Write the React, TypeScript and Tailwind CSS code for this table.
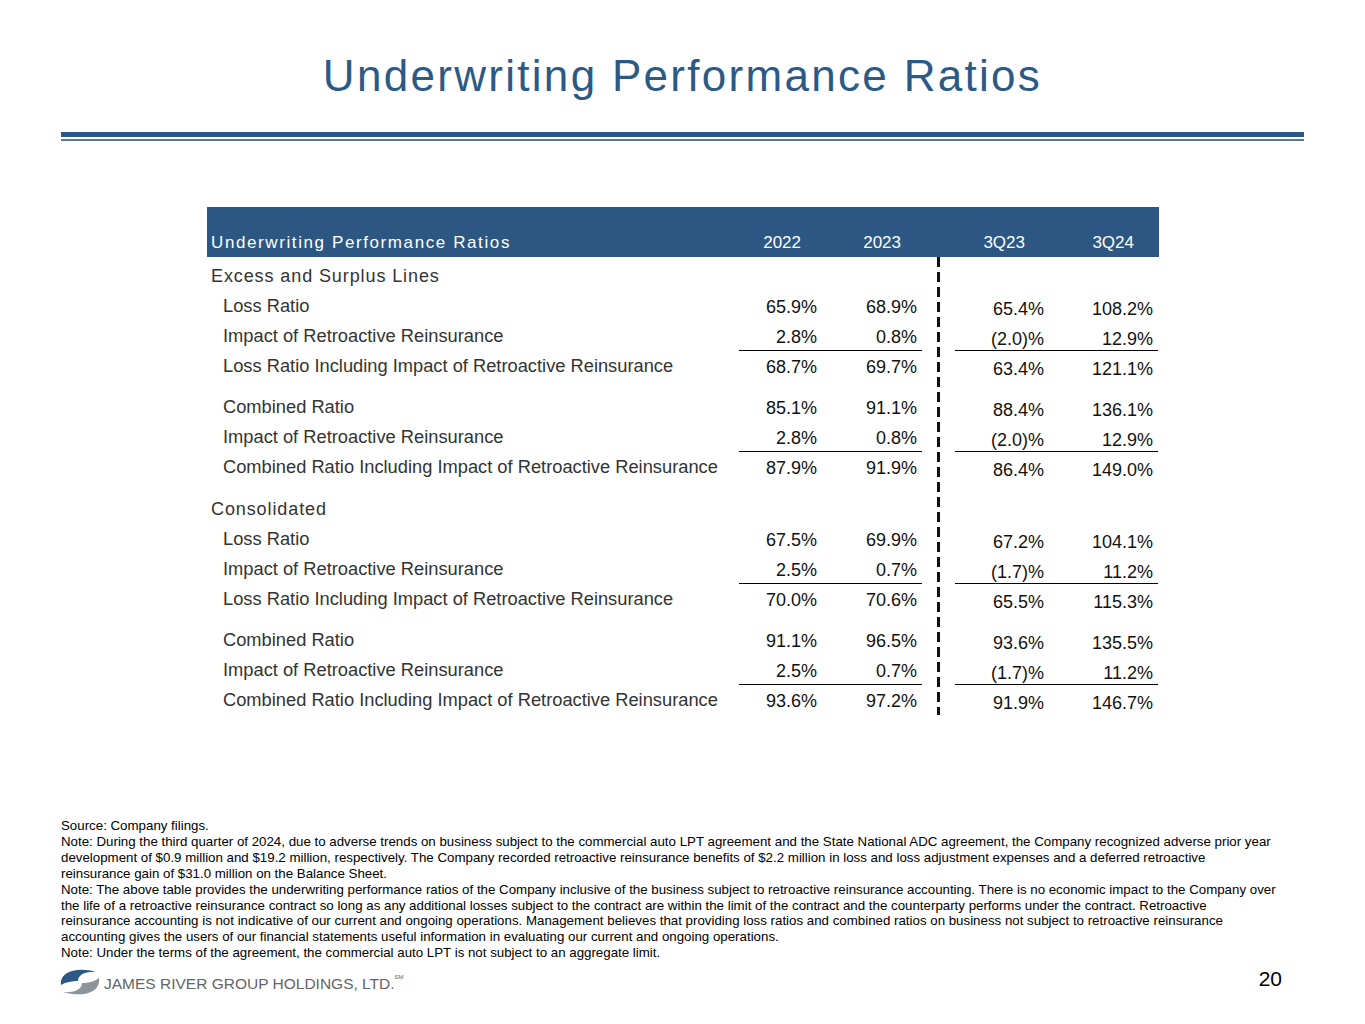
import React from "react";

type Row =
  | { kind: "section"; label: string }
  | { kind: "gap"; h: number }
  | { kind: "row"; label: string; v: [string, string, string, string]; line?: boolean };

const ROWS: Row[] = [
  { kind: "section", label: "Excess and Surplus Lines" },
  { kind: "row", label: "Loss Ratio", v: ["65.9%", "68.9%", "65.4%", "108.2%"] },
  { kind: "row", label: "Impact of Retroactive Reinsurance", v: ["2.8%", "0.8%", "(2.0)%", "12.9%"], line: true },
  { kind: "row", label: "Loss Ratio Including Impact of Retroactive Reinsurance", v: ["68.7%", "69.7%", "63.4%", "121.1%"] },
  { kind: "gap", h: 11 },
  { kind: "row", label: "Combined Ratio", v: ["85.1%", "91.1%", "88.4%", "136.1%"] },
  { kind: "row", label: "Impact of Retroactive Reinsurance", v: ["2.8%", "0.8%", "(2.0)%", "12.9%"], line: true },
  { kind: "row", label: "Combined Ratio Including Impact of Retroactive Reinsurance", v: ["87.9%", "91.9%", "86.4%", "149.0%"] },
  { kind: "gap", h: 12 },
  { kind: "section", label: "Consolidated" },
  { kind: "row", label: "Loss Ratio", v: ["67.5%", "69.9%", "67.2%", "104.1%"] },
  { kind: "row", label: "Impact of Retroactive Reinsurance", v: ["2.5%", "0.7%", "(1.7)%", "11.2%"], line: true },
  { kind: "row", label: "Loss Ratio Including Impact of Retroactive Reinsurance", v: ["70.0%", "70.6%", "65.5%", "115.3%"] },
  { kind: "gap", h: 11 },
  { kind: "row", label: "Combined Ratio", v: ["91.1%", "96.5%", "93.6%", "135.5%"] },
  { kind: "row", label: "Impact of Retroactive Reinsurance", v: ["2.5%", "0.7%", "(1.7)%", "11.2%"], line: true },
  { kind: "row", label: "Combined Ratio Including Impact of Retroactive Reinsurance", v: ["93.6%", "97.2%", "91.9%", "146.7%"] },
];

const NOTES = [
  "Source: Company filings.",
  "Note: During the third quarter of 2024, due to adverse trends on business subject to the commercial auto LPT agreement and the State National ADC agreement, the Company recognized adverse prior year",
  "development of $0.9 million and $19.2 million, respectively. The Company recorded retroactive reinsurance benefits of $2.2 million in loss and loss adjustment expenses and a deferred retroactive",
  "reinsurance gain of $31.0 million on the Balance Sheet.",
  "Note: The above table provides the underwriting performance ratios of the Company inclusive of the business subject to retroactive reinsurance accounting. There is no economic impact to the Company over",
  "the life of a retroactive reinsurance contract so long as any additional losses subject to the contract are within the limit of the contract and the counterparty performs under the contract. Retroactive",
  "reinsurance accounting is not indicative of our current and ongoing operations. Management believes that providing loss ratios and combined ratios on business not subject to retroactive reinsurance",
  "accounting gives the users of our financial statements useful information in evaluating our current and ongoing operations.",
  "Note: Under the terms of the agreement, the commercial auto LPT is not subject to an aggregate limit.",
];

function Logo() {
  return (
    <svg width="40" height="30" viewBox="0 0 40 30">
      <path d="M1 18 C -1 5, 16 -1, 37 5 C 25 4, 18 8, 18 14 C 12 14, 6 15, 1 18 Z" fill="#2c5885" />
      <path d="M39 11 C 41 25, 24 31, 3 25 C 15 26, 22 22, 22 16 C 28 16, 34 15, 39 11 Z" fill="#8d939b" />
    </svg>
  );
}

export default function App() {
  return (
    <div className="w-[1365px] h-[1024px] bg-white font-['Liberation_Sans',Arial,sans-serif] overflow-hidden">
      {/* Title */}
      <div className="pt-[54px] text-center">
        <h1 className="text-[44px] leading-[44px] tracking-[2.3px] text-[#2b5a87]">Underwriting Performance Ratios</h1>
      </div>
      <div className="ml-[61px] w-[1243px] mt-[34px]">
        <div className="h-[5px] bg-[#2b5886]" />
        <div className="h-[2px] mt-[2px] bg-[#5a7797]" />
      </div>

      {/* Table */}
      <div className="ml-[207px] w-[952px] mt-[66px]">
        <div className="h-[50px] bg-[#2c5783] text-white flex text-[17px] leading-[20px]">
          <div className="w-[532px] pl-[4px] pt-[26px] tracking-[1.6px]">Underwriting Performance Ratios</div>
          <div className="w-[83px] pr-[21px] pt-[26px] text-right">2022</div>
          <div className="w-[100px] pr-[21px] pt-[26px] text-right">2023</div>
          <div className="w-[33px]" />
          <div className="w-[94px] pr-[24px] pt-[26px] text-right">3Q23</div>
          <div className="w-[109px] pr-[24px] pt-[26px] text-right">3Q24</div>
        </div>

        <div className="flex items-stretch">
          {/* left: labels and annual figures */}
          <div className="w-[715px] pt-[4px]">
            {ROWS.map((r, i) => {
              if (r.kind === "gap") return <div key={i} style={{ height: r.h }} />;
              if (r.kind === "section")
                return (
                  <div key={i} className="h-[30px] pl-[4px] pt-[5px] text-[18px] leading-[20px] tracking-[0.9px] text-[#333]">
                    {r.label}
                  </div>
                );
              return (
                <div key={i} className="h-[30px] flex text-[18px] leading-[20px]">
                  <div className="w-[532px] pl-[16px] pt-[5px] text-[18.3px] text-[#333] whitespace-nowrap">{r.label}</div>
                  <div className={`w-[83px] pr-[5px] pt-[6px] text-right text-[#111] ${r.line ? "border-b border-black" : ""}`}>{r.v[0]}</div>
                  <div className={`w-[100px] pr-[5px] pt-[6px] text-right text-[#111] ${r.line ? "border-b border-black" : ""}`}>{r.v[1]}</div>
                </div>
              );
            })}
          </div>

          {/* dashed divider */}
          <div className="w-[33px] flex justify-center">
            <div className="w-[3px] bg-[image:repeating-linear-gradient(to_bottom,#111_0px,#111_10px,transparent_10px,transparent_15px)]" />
          </div>

          {/* right: quarterly figures */}
          <div className="w-[203px] pt-[4px]">
            {ROWS.map((r, i) => {
              if (r.kind === "gap") return <div key={i} style={{ height: r.h }} />;
              if (r.kind === "section") return <div key={i} className="h-[30px]" />;
              return (
                <div key={i} className={`h-[30px] flex text-[18px] leading-[20px] text-[#111] ${r.line ? "border-b border-black" : ""}`}>
                  <div className="w-[94px] pr-[5px] pt-[8px] text-right">{r.v[2]}</div>
                  <div className="w-[109px] pr-[5px] pt-[8px] text-right">{r.v[3]}</div>
                </div>
              );
            })}
          </div>
        </div>
      </div>

      {/* Footnotes */}
      <div className="ml-[61px] mt-[103px] text-[13.3px] leading-[15.9px] text-black">
        {NOTES.map((n, i) => (
          <div key={i} className="whitespace-nowrap">{n}</div>
        ))}
      </div>

      {/* Footer */}
      <div className="ml-[60px] w-[1222px] mt-[6px] flex justify-between items-start">
        <div className="flex items-center gap-[4px]">
          <Logo />
          <div className="text-[15.5px] text-[#62656a] pt-[2px]">
            JAMES RIVER GROUP HOLDINGS, LTD.<sup className="text-[6px] align-super">SM</sup>
          </div>
        </div>
        <div className="text-[21px] leading-[24px] text-black">20</div>
      </div>
    </div>
  );
}
